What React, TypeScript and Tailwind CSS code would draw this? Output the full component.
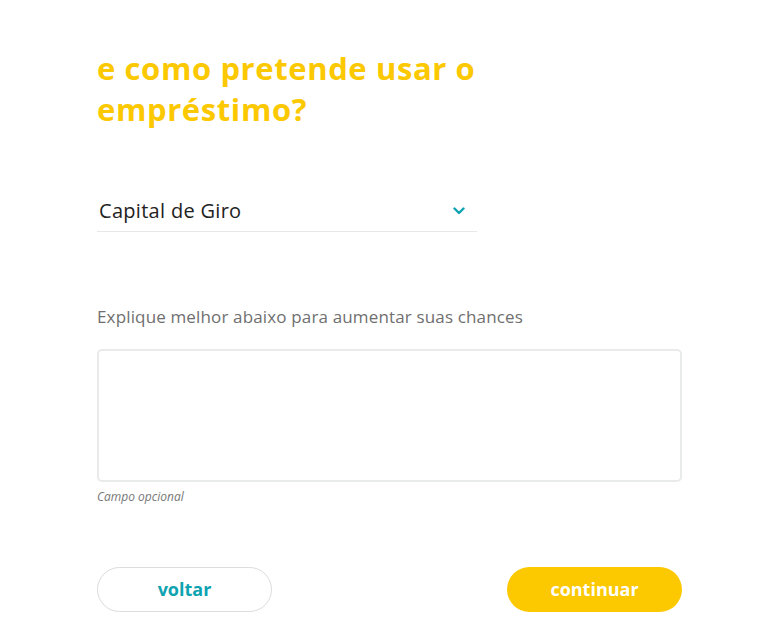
const App = () => {
  return (
    <div className="min-h-[643px] w-full bg-white font-['Open_Sans',sans-serif]">
      <div className="w-[585px] ml-[97px] pt-[48px] pb-[31px]">
        <h1 className="w-[400px] text-[31px] leading-[41px] font-bold text-[#fcc800] tracking-[0.6px]">
          e como pretende usar o empréstimo?
        </h1>

        <div className="mt-[66px] w-[380px] flex items-center justify-between border-b border-[#e8e8e8] pl-[2px] pr-[12px] pb-[5px]">
          <span className="text-[20px] leading-[30px] text-[#222] tracking-[0.3px]">
            Capital de Giro
          </span>
          <svg width="12" height="8" viewBox="0 0 12 8" fill="none">
            <path
              d="M1.5 1.5 L6 6 L10.5 1.5"
              stroke="#0fa3b1"
              strokeWidth="2.4"
              strokeLinecap="round"
              strokeLinejoin="round"
            />
          </svg>
        </div>

        <p className="mt-[72px] text-[17px] leading-[26px] text-[#6f6f6f] tracking-[0.15px]">
          Explique melhor abaixo para aumentar suas chances
        </p>

        <textarea className="mt-[19px] block w-[585px] h-[133px] resize-none rounded-[5px] border-2 border-[#e8ebea] outline-none p-3 text-[16px]" />

        <p className="mt-[8px] text-[12px] leading-[14px] italic text-[#777]">
          Campo opcional
        </p>

        <div className="mt-[63px] flex justify-between">
          <button className="w-[175px] h-[45px] rounded-full border border-[#dcdcdc] bg-white text-[18px] font-bold text-[#0fa3b1]">
            voltar
          </button>
          <button className="w-[175px] h-[45px] rounded-full bg-[#fcc800] text-[18px] font-bold text-white">
            continuar
          </button>
        </div>
      </div>
    </div>
  );
};

export default App;
